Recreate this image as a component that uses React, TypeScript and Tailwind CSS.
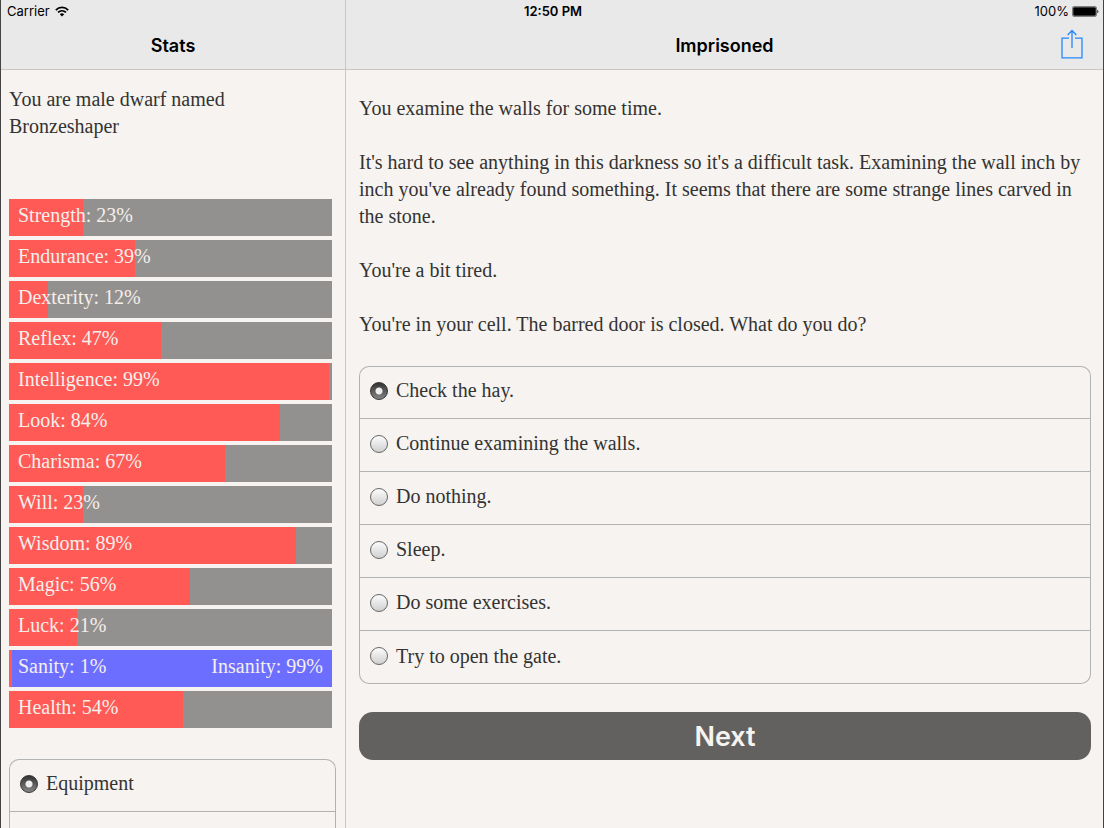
type Stat = { name: string; value: number; opposite?: string };

const stats: Stat[] = [
  { name: 'Strength', value: 23 },
  { name: 'Endurance', value: 39 },
  { name: 'Dexterity', value: 12 },
  { name: 'Reflex', value: 47 },
  { name: 'Intelligence', value: 99 },
  { name: 'Look', value: 84 },
  { name: 'Charisma', value: 67 },
  { name: 'Will', value: 23 },
  { name: 'Wisdom', value: 89 },
  { name: 'Magic', value: 56 },
  { name: 'Luck', value: 21 },
  { name: 'Sanity', value: 1, opposite: 'Insanity' },
  { name: 'Health', value: 54 },
];

const actions = [
  'Check the hay.',
  'Continue examining the walls.',
  'Do nothing.',
  'Sleep.',
  'Do some exercises.',
  'Try to open the gate.',
];

const story = [
  'You examine the walls for some time.',
  "It's hard to see anything in this darkness so it's a difficult task. Examining the wall inch by inch you've already found something. It seems that there are some strange lines carved in the stone.",
  "You're a bit tired.",
  "You're in your cell. The barred door is closed. What do you do?",
];

function StatusBar() {
  return (
    <div className="absolute inset-x-0 top-0 grid h-[22px] grid-cols-3 items-center pr-1 pl-[6px] text-[13px] leading-[22px] text-black">
      <div className="flex items-center gap-[5px]">
        <span>Carrier</span>
        <svg width="14" height="11" viewBox="0 0 14 11" fill="none" stroke="#000" strokeWidth="1.7" aria-label="Wi-Fi">
          <path d="M0.8 4.1C4.3 0.5 9.7 0.5 13.2 4.1" />
          <path d="M3 6.4C5.3 4.2 8.7 4.2 11 6.4" />
          <path d="M4.8 8.2C6.1 7 7.9 7 9.2 8.2L7 10.5Z" fill="#000" stroke="none" />
        </svg>
      </div>
      <div className="text-center font-semibold">12:50 PM</div>
      <div className="flex items-center justify-end gap-[3px]">
        <span>100%</span>
        <svg width="27" height="11" viewBox="0 0 27 11" aria-label="Battery full">
          <rect x="0.5" y="0.5" width="24" height="10" rx="1.5" fill="none" stroke="#666" strokeWidth="0.8" />
          <rect x="1.2" y="1.2" width="22.6" height="8.6" rx="1" fill="#000" />
          <path d="M25.3 3.7C26.8 4.1 26.8 6.9 25.3 7.3Z" fill="#222" />
        </svg>
      </div>
    </div>
  );
}

const radioClass =
  'm-0 size-[18px] shrink-0 appearance-none rounded-full border border-[#666] bg-linear-to-b from-[#fcfcfc] to-[#d0d0d0] checked:border-[#333] checked:bg-[radial-gradient(circle,#eee_0,#eee_3px,transparent_4px),linear-gradient(#333,#858585)]';

function Options({ name, items, open }: { name: string; items: string[]; open?: boolean }) {
  return (
    <fieldset className="min-w-0 divide-y divide-[#b0b2b4] overflow-hidden rounded-[10px] inset-ring inset-ring-[#b0b2b4]">
      {items.map((item, i) => (
        <label key={item} className="flex h-[53px] items-center gap-2 px-[11px] pb-[3px]">
          <input type="radio" name={name} defaultChecked={i === 0} className={radioClass} />
          <span>{item}</span>
        </label>
      ))}
      {open && (
        <div className="flex h-[53px] items-center px-[11px] pb-1">
          <input type="radio" name={name} aria-label="More" className={radioClass} />
        </div>
      )}
    </fieldset>
  );
}

function StatBar({ name, value, opposite }: Stat) {
  return (
    <li
      className={
        'grid h-[37px] text-[#f5efec] ' + (opposite ? 'bg-[#6c6eff]' : 'bg-[#92918f]')
      }
    >
      <div className="col-start-1 row-start-1 bg-[#ff5a56]" style={{ width: `${value}%` }} />
      <div className="z-10 col-start-1 row-start-1 flex justify-between px-[9px] pt-[3px]">
        <span>{`${name}: ${value}%`}</span>
        {opposite && <span>{`${opposite}: ${100 - value}%`}</span>}
      </div>
    </li>
  );
}

export default function App() {
  return (
    <div className="relative flex h-screen overflow-hidden border-x border-[#444] bg-[#f7f3f0] font-['Liberation_Serif',serif] text-xl leading-[27px] text-[#333]">
      <aside className="flex w-[345px] shrink-0 flex-col border-r border-[#c8c7c8]">
        <header className="flex h-[70px] shrink-0 items-end justify-center border-b border-[#c8c7c8] bg-[#e9e9ea] pb-[10px] font-['Inter',sans-serif] text-lg font-semibold leading-[27px] text-black">
          <h2>Stats</h2>
        </header>
        <div className="min-h-0 flex-1 overflow-hidden pr-[9px] pl-2 pt-4">
          <p>
            You are male dwarf named
            <br />
            Bronzeshaper
          </p>
          <ul className="mt-[59px] mr-1 flex flex-col gap-1">
            {stats.map((s) => (
              <StatBar key={s.name} {...s} />
            ))}
          </ul>
          <div className="mt-[31px]">
            <Options name="panel" items={['Equipment']} open />
          </div>
        </div>
      </aside>
      <main className="flex min-w-0 flex-1 flex-col">
        <header className="grid h-[70px] shrink-0 grid-cols-[1fr_auto_1fr] items-end border-b border-[#c8c7c8] bg-[#e9e9ea] px-5 pb-[10px] font-['Inter',sans-serif] text-lg font-semibold leading-[27px] text-black">
          <h1 className="col-start-2">Imprisoned</h1>
          <button type="button" aria-label="Share" className="justify-self-end">
            <svg width="22" height="30" viewBox="0 0 22 30" fill="none" stroke="#2487ff" strokeWidth="1.3">
              <path d="M8 9.2H1V28.8H21V9.2H14M11 19V1.5M6.7 6L11 1.5L15.3 6" />
            </svg>
          </button>
        </header>
        <div className="min-h-0 flex-1 overflow-hidden pr-3 pl-[13px] pt-[25px]">
          <div className="flex flex-col gap-[27px]">
            {story.map((p) => (
              <p key={p}>{p}</p>
            ))}
          </div>
          <div className="mt-7">
            <Options name="action" items={actions} />
            <button
              type="button"
              className="mt-7 flex h-12 w-full items-center justify-center rounded-[14px] bg-[#62615f] font-['Inter',sans-serif] text-[27px] font-semibold text-[#f7f3f0]"
            >
              Next
            </button>
          </div>
        </div>
      </main>
      <div className="font-['Inter',sans-serif]">
        <StatusBar />
      </div>
    </div>
  );
}
